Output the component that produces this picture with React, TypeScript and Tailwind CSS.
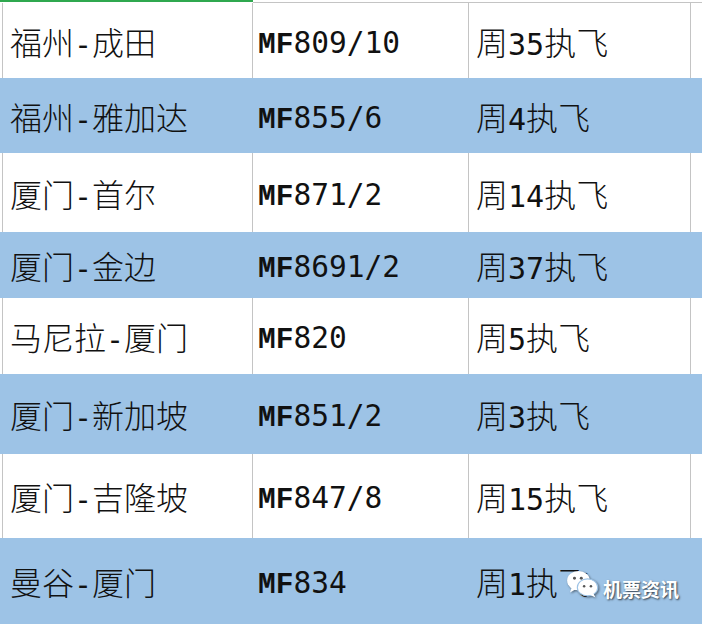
const rows = [
  { route: "福州-成田", code: "809/10", days: "周35执飞", h: "h-[75px]", blue: false },
  { route: "福州-雅加达", code: "855/6", days: "周4执飞", h: "h-[75px]", blue: true },
  { route: "厦门-首尔", code: "871/2", days: "周14执飞", h: "h-[79px]", blue: false },
  { route: "厦门-金边", code: "8691/2", days: "周37执飞", h: "h-[66px]", blue: true },
  { route: "马尼拉-厦门", code: "820", days: "周5执飞", h: "h-[76px]", blue: false },
  { route: "厦门-新加坡", code: "851/2", days: "周3执飞", h: "h-[80px]", blue: true },
  { route: "厦门-吉隆坡", code: "847/8", days: "周15执飞", h: "h-[84px]", blue: false },
  { route: "曼谷-厦门", code: "834", days: "周1执飞", h: "h-[86px]", blue: true },
];

// 中文用细体，数字和横线用等宽字体
function CellText({ text }: { text: string }) {
  const parts = text.match(/[\x00-\x7f]+|[^\x00-\x7f]+/g) ?? [];
  return (
    <span className="text-[32px] leading-none whitespace-nowrap">
      {parts.map((p, i) =>
        /^[\x00-\x7f]/.test(p) ? (
          <span key={i} className="font-['DejaVu_Sans_Mono',monospace] text-[30px] font-normal">
            {p}
          </span>
        ) : (
          <span key={i} className="font-['Noto_Sans_CJK_SC',sans-serif] font-light">
            {p}
          </span>
        )
      )}
    </span>
  );
}

function WeChatMark() {
  return (
    <svg width="34" height="32" viewBox="0 0 30 28" className="drop-shadow-[1px_1px_1px_rgba(0,0,0,0.5)]">
      <ellipse cx="11" cy="11" rx="10" ry="8.5" fill="#fff" />
      <path d="M5 17 L3.5 21.5 L9 18.5 Z" fill="#fff" />
      <ellipse cx="19" cy="17" rx="9" ry="7.5" stroke="#9dc3e6" strokeWidth="1" fill="#fff" />
      <path d="M24 22 L26 26 L21 23.5 Z" fill="#fff" />
      <circle cx="7.5" cy="9" r="1.3" fill="#555" />
      <circle cx="13.5" cy="9" r="1.3" fill="#555" />
      <circle cx="16" cy="16" r="1.1" fill="#555" />
      <circle cx="22" cy="16" r="1.1" fill="#555" />
    </svg>
  );
}

export default function App() {
  return (
    <div className="relative w-[702px] h-[624px] overflow-hidden bg-white text-[#111]">
      {/* 顶部选中标记 */}
      <div className="flex h-[3px]">
        <div className="w-[253px] h-[2px] bg-[#2fa84f]" />
        <div className="flex-1 border-b border-[#c4c4c4]" />
      </div>

      {rows.map((r, i) => (
        <div
          key={i}
          className={`grid grid-cols-[3px_250px_216px_222px_1fr] ${r.h} ${
            r.blue ? "bg-[#9dc3e6]" : "bg-white"
          }`}
        >
          <div className={r.blue ? "" : "border-r border-[#c4c4c4]"} />
          <div className={`flex items-center pl-[7px] pt-[3px] ${r.blue ? "" : "border-r border-[#c4c4c4]"}`}>
            <CellText text={r.route} />
          </div>
          <div className={`flex items-center pl-[5px] pt-[6px] ${r.blue ? "" : "border-r border-[#c4c4c4]"}`}>
            <span className="text-[29.5px] leading-none whitespace-nowrap">
              <span className="font-['Liberation_Mono',monospace] font-bold">MF</span>
              <span className="font-['DejaVu_Sans_Mono',monospace]">{r.code}</span>
            </span>
          </div>
          <div className={`flex items-center pl-[7px] pt-[3px] ${r.blue ? "" : "border-r border-[#c4c4c4]"}`}>
            <CellText text={r.days} />
          </div>
          <div />
        </div>
      ))}

      {/* 水印 */}
      <div className="absolute left-[566px] top-[568px] flex items-center gap-[3px]">
        <WeChatMark />
        <span className="mt-[8px] font-['Noto_Sans_CJK_SC',sans-serif] text-[19px] font-bold text-white leading-none [text-shadow:1px_1px_2px_rgba(0,0,0,0.7)]">
          机票资讯
        </span>
      </div>
    </div>
  );
}
